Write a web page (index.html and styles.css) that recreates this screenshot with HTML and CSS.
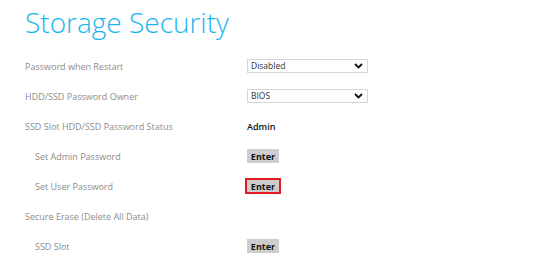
FILE: index.html
```html
<!DOCTYPE html>
<html lang="en">

<head>
    <meta charset="UTF-8">
    <meta name="viewport" content="width=device-width, initial-scale=1.0">
    <title>Storage Security</title>
    <link rel="stylesheet" href="styles.css">
</head>

<body>
    <div class="page">
        <h1 class="title">Storage Security</h1>

        <div class="settings">
            <div class="label">Password when Restart</div>
            <div class="value">
                <div class="select-wrap">
                    <select>
                        <option>Disabled</option>
                        <option>Enabled</option>
                    </select>
                    <svg class="chevron" width="9" height="6" viewBox="0 0 9 6">
                        <path d="M1 1 L4.5 4.5 L8 1" fill="none" stroke="#111" stroke-width="1.8" />
                    </svg>
                </div>
            </div>

            <div class="label">HDD/SSD Password Owner</div>
            <div class="value">
                <div class="select-wrap">
                    <select>
                        <option>BIOS</option>
                        <option>OS</option>
                    </select>
                    <svg class="chevron" width="9" height="6" viewBox="0 0 9 6">
                        <path d="M1 1 L4.5 4.5 L8 1" fill="none" stroke="#111" stroke-width="1.8" />
                    </svg>
                </div>
            </div>

            <div class="label">SSD Slot HDD/SSD Password Status</div>
            <div class="value"><span class="status">Admin</span></div>

            <div class="label sub">Set Admin Password</div>
            <div class="value"><button class="btn">Enter</button></div>

            <div class="label sub">Set User Password</div>
            <div class="value"><button class="btn selected">Enter</button></div>

            <div class="label">Secure Erase (Delete All Data)</div>
            <div class="value"></div>

            <div class="label sub">SSD Slot</div>
            <div class="value"><button class="btn">Enter</button></div>
        </div>
    </div>
</body>

</html>
```

FILE: styles.css
```css
body {
    margin: 0;
    background-color: #ffffff;
    font-family: "Open Sans", "Noto Sans", sans-serif;
}

.page {
    padding-left: 25px;
}

.title {
    margin: 0;
    height: 51px;
    padding-top: 4px;
    box-sizing: border-box;
    font-size: 28px;
    font-weight: 300;
    color: #1ab6ef;
    line-height: 36px;
}

.settings {
    display: grid;
    grid-template-columns: 222px 1fr;
    grid-auto-rows: 30px;
    align-items: center;
}

.label {
    font-size: 9px;
    color: #8c8c8c;
}

.label.sub {
    padding-left: 10px;
}

.value {
    display: flex;
    align-items: center;
}

.select-wrap {
    position: relative;
    width: 121px;
    height: 14px;
}

.select-wrap select {
    display: block;
    appearance: none;
    -webkit-appearance: none;
    width: 100%;
    height: 100%;
    margin: 0;
    padding: 0 0 0 3px;
    border: 1px solid #d6d6d6;
    border-radius: 0;
    background-color: #ffffff;
    font-family: "Open Sans", "Noto Sans", sans-serif;
    font-size: 8.5px;
    line-height: 12px;
    color: #333;
}

.chevron {
    position: absolute;
    right: 5px;
    top: 4px;
}

.status {
    font-size: 9px;
    font-weight: 600;
    color: #111;
}

.btn {
    width: 32px;
    height: 14px;
    padding: 0;
    border: none;
    background-color: #cdcdcd;
    font-family: "Open Sans", "Noto Sans", sans-serif;
    font-size: 9px;
    font-weight: 700;
    color: #111;
    cursor: pointer;
}

.btn.selected {
    height: 16px;
    width: 36px;
    margin-left: -2px;
    border: 2px solid #e31b23;
    box-sizing: border-box;
}
```
